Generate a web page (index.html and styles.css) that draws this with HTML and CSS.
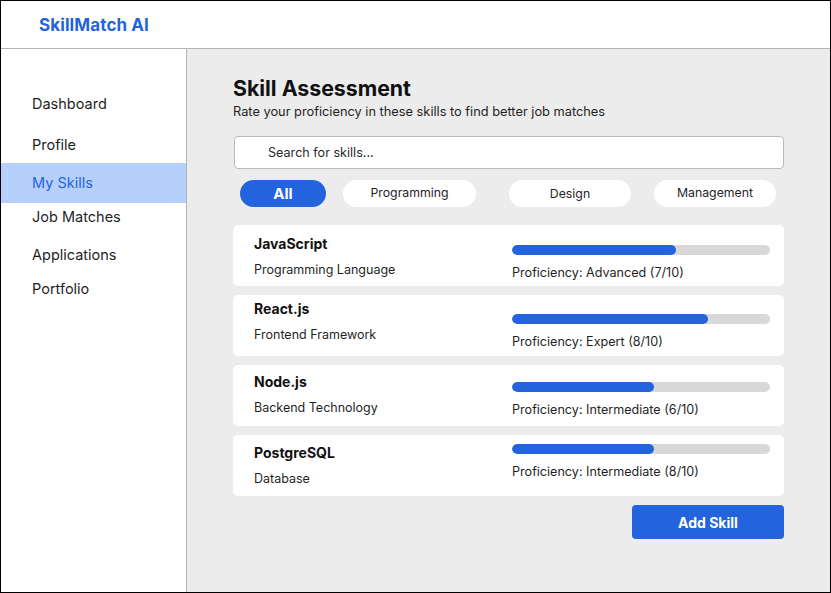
FILE: index.html
```html
<!DOCTYPE html>
<html lang="en">
<head>
<meta charset="utf-8">
<title>SkillMatch AI - Skill Assessment</title>
<link rel="stylesheet" href="styles.css">
</head>
<body>
<div class="frame">
  <header class="topbar">
    <div class="logo">SkillMatch AI</div>
  </header>
  <div class="body">
    <nav class="sidebar">
      <a class="nav-item nav-dashboard">Dashboard</a>
      <a class="nav-item nav-profile">Profile</a>
      <a class="nav-item nav-active">My Skills</a>
      <a class="nav-item nav-jobs">Job Matches</a>
      <a class="nav-item nav-apps">Applications</a>
      <a class="nav-item nav-portfolio">Portfolio</a>
    </nav>
    <main class="main">
      <h1 class="title">Skill Assessment</h1>
      <p class="subtitle">Rate your proficiency in these skills to find better job matches</p>
      <div class="search">Search for skills...</div>
      <div class="filters">
        <span class="pill pill-active pill-all">All</span>
        <span class="pill pill-prog">Programming</span>
        <span class="pill pill-design">Design</span>
        <span class="pill pill-mgmt">Management</span>
      </div>
      <div class="cards">
        <div class="card card-1">
          <div class="card-info">
            <div class="skill-name">JavaScript</div>
            <div class="skill-type">Programming Language</div>
          </div>
          <div class="card-level">
            <div class="bar"><div class="fill" style="width:164px"></div></div>
            <div class="level-text">Proficiency: Advanced (7/10)</div>
          </div>
        </div>
        <div class="card card-2">
          <div class="card-info">
            <div class="skill-name">React.js</div>
            <div class="skill-type">Frontend Framework</div>
          </div>
          <div class="card-level">
            <div class="bar"><div class="fill" style="width:196px"></div></div>
            <div class="level-text">Proficiency: Expert (8/10)</div>
          </div>
        </div>
        <div class="card card-3">
          <div class="card-info">
            <div class="skill-name">Node.js</div>
            <div class="skill-type">Backend Technology</div>
          </div>
          <div class="card-level">
            <div class="bar"><div class="fill" style="width:142px"></div></div>
            <div class="level-text">Proficiency: Intermediate (6/10)</div>
          </div>
        </div>
        <div class="card card-4">
          <div class="card-info">
            <div class="skill-name">PostgreSQL</div>
            <div class="skill-type">Database</div>
          </div>
          <div class="card-level">
            <div class="bar"><div class="fill" style="width:142px"></div></div>
            <div class="level-text">Proficiency: Intermediate (8/10)</div>
          </div>
        </div>
      </div>
      <div class="actions">
        <button class="add-btn">Add Skill</button>
      </div>
    </main>
  </div>
</div>
</body>
</html>
```

FILE: styles.css
```css
* { box-sizing: border-box; }

html, body {
  margin: 0;
  padding: 0;
}

body {
  font-family: Inter, "Noto Sans", sans-serif;
  color: #1a1a1a;
  background: #ffffff;
}

.frame {
  width: 831px;
  height: 593px;
  border: 1px solid #000000;
  display: flex;
  flex-direction: column;
  overflow: hidden;
}

.topbar {
  height: 48px;
  flex: 0 0 48px;
  border-bottom: 1px solid #b4b4b4;
  background: #ffffff;
  display: flex;
  align-items: center;
  padding-left: 38px;
}

.logo {
  font-size: 17px;
  font-weight: 700;
  color: #2364de;
  line-height: 20px;
  letter-spacing: 0.1px;
}

.body {
  flex: 1;
  display: flex;
  min-height: 0;
}

.sidebar {
  width: 186px;
  flex: 0 0 186px;
  border-right: 1px solid #b4b4b4;
  background: #ffffff;
  display: flex;
  flex-direction: column;
  padding-top: 45px;
}

.nav-item {
  display: block;
  font-size: 14.5px;
  line-height: 20px;
  color: #1f1f1f;
  padding-left: 31px;
}

.nav-profile { margin-top: 21px; }
.nav-active {
  margin-top: 8px;
  padding-top: 10px;
  padding-bottom: 10px;
  background: #b7d0fb;
  color: #2364de;
}
.nav-jobs { margin-top: 4px; }
.nav-apps { margin-top: 18px; }
.nav-portfolio { margin-top: 14px; }

.main {
  flex: 1;
  background: #ececec;
  padding: 27px 46px 0 46px;
}

.title {
  margin: 0;
  font-size: 21.3px;
  line-height: 24px;
  font-weight: 700;
  color: #111111;
}

.subtitle {
  margin: 4px 0 0 0;
  font-size: 12.8px;
  line-height: 16px;
  color: #1f1f1f;
}

.search {
  margin: 16px 0 0 1px;
  height: 33px;
  border: 1px solid #b9b9b9;
  border-radius: 4px;
  background: #ffffff;
  font-size: 12.6px;
  line-height: 31px;
  padding-left: 33px;
  color: #2a2a2a;
}

.filters {
  display: flex;
  margin-top: 11px;
  padding-left: 7px;
}

.pill {
  height: 27px;
  border-radius: 14px;
  background: #ffffff;
  font-size: 12.3px;
  line-height: 27px;
  text-align: center;
  color: #1f1f1f;
}

.pill-all {
  width: 86px;
  background: #2364de;
  color: #ffffff;
  font-weight: 700;
  font-size: 15px;
}
.pill-prog { width: 133px; margin-left: 17px; line-height: 25px; }
.pill-design { width: 122px; margin-left: 33px; line-height: 28px; }
.pill-mgmt { width: 122px; margin-left: 23px; line-height: 25px; }

.cards {
  margin-top: 18px;
  display: flex;
  flex-direction: column;
  gap: 9px;
}

.card {
  height: 61px;
  background: #ffffff;
  border-radius: 5px;
  display: flex;
  padding-left: 21px;
  padding-right: 14px;
}

.card-info {
  width: 258px;
}

.card-level {
  flex: 1;
}

.skill-name {
  font-size: 14px;
  line-height: 18px;
  font-weight: 700;
  color: #111111;
}

.skill-type {
  margin-top: 9px;
  font-size: 12.5px;
  line-height: 16px;
  color: #1f1f1f;
}

.bar {
  height: 10px;
  border-radius: 5px;
  background: #d8d8d8;
  overflow: hidden;
}

.fill {
  height: 10px;
  border-radius: 5px;
  background: #2364de;
}

.level-text {
  margin-top: 10px;
  font-size: 12.6px;
  line-height: 16px;
  color: #1f1f1f;
}

.card-1 .card-info { padding-top: 10px; }
.card-1 .card-level { padding-top: 20px; }
.card-2 .card-info { padding-top: 5px; }
.card-2 .card-level { padding-top: 19px; }
.card-3 .card-info { padding-top: 8px; }
.card-3 .card-level { padding-top: 17px; }
.card-4 .card-info { padding-top: 9px; }
.card-4 .card-level { padding-top: 9px; }

.actions {
  display: flex;
  justify-content: flex-end;
  margin-top: 9px;
}

.add-btn {
  width: 152px;
  height: 34px;
  border: none;
  border-radius: 4px;
  background: #2364de;
  color: #ffffff;
  font-family: Inter, "Noto Sans", sans-serif;
  font-size: 14px;
  font-weight: 700;
  cursor: pointer;
}
```
